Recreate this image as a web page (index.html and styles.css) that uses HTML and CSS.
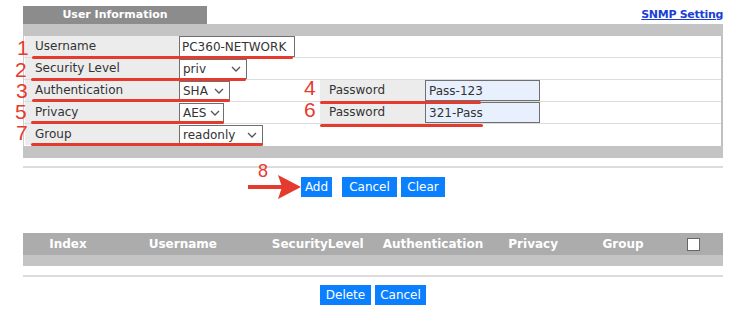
FILE: index.html
```html
<!DOCTYPE html>
<html>
<head>
    <meta charset="utf-8" />
    <title>SNMP User</title>
    <link rel="stylesheet" href="styles.css">
</head>
<body>
    <div class="page">
        <div class="top">
            <div class="tab">User Information</div>
            <a class="link" href="#">SNMP Setting</a>
        </div>
        <div class="bar"></div>
        <div class="form">
            <div class="row">
                <div class="lbl">Username</div>
                <div class="fld"><input type="text" class="txt" value="PC360-NETWORK"></div>
            </div>
            <div class="row">
                <div class="lbl">Security Level</div>
                <div class="fld"><div class="sel w-priv"><span>priv</span><svg width="10" height="6" viewBox="0 0 10 6"><path d="M1 1l4 4 4-4" fill="none" stroke="#555" stroke-width="1.3"/></svg></div></div>
            </div>
            <div class="row">
                <div class="lbl">Authentication</div>
                <div class="fld"><div class="sel w-sha"><span>SHA</span><svg width="10" height="6" viewBox="0 0 10 6"><path d="M1 1l4 4 4-4" fill="none" stroke="#555" stroke-width="1.3"/></svg></div></div>
                <div class="lbl2">Password</div>
                <input type="text" class="pwd" value="Pass-123">
            </div>
            <div class="row">
                <div class="lbl">Privacy</div>
                <div class="fld"><div class="sel w-aes"><span>AES</span><svg width="10" height="6" viewBox="0 0 10 6"><path d="M1 1l4 4 4-4" fill="none" stroke="#555" stroke-width="1.3"/></svg></div></div>
                <div class="lbl2">Password</div>
                <input type="text" class="pwd" value="321-Pass">
            </div>
            <div class="row">
                <div class="lbl">Group</div>
                <div class="fld"><div class="sel w-grp"><span>readonly</span><svg width="10" height="6" viewBox="0 0 10 6"><path d="M1 1l4 4 4-4" fill="none" stroke="#555" stroke-width="1.3"/></svg></div></div>
            </div>
        </div>
        <div class="bar"></div>
        <div class="rule"></div>
        <div class="btns">
            <button class="btn b-add">Add</button>
            <button class="btn b-cancel">Cancel</button>
            <button class="btn b-clear">Clear</button>
        </div>

        <table class="list">
            <tr class="head">
                <th class="c1">Index</th>
                <th class="c2">Username</th>
                <th class="c3">SecurityLevel</th>
                <th class="c4">Authentication</th>
                <th class="c5">Privacy</th>
                <th class="c6">Group</th>
                <th class="c7"><span class="chk"></span></th>
            </tr>
            <tr class="empty"><td colspan="7"></td></tr>
        </table>
        <div class="rule rule2"></div>
        <div class="btns btns2">
            <button class="btn b-del">Delete</button>
            <button class="btn b-del">Cancel</button>
        </div>
    </div>

    <!-- red marks drawn on top of the screenshot -->
    <div class="marks">
        <span class="num" style="left:17px;top:37px">1</span>
        <span class="num" style="left:15px;top:59px">2</span>
        <span class="num" style="left:16px;top:80px">3</span>
        <span class="num" style="left:304px;top:77px">4</span>
        <span class="num" style="left:15px;top:101px">5</span>
        <span class="num" style="left:304px;top:99px">6</span>
        <span class="num" style="left:16px;top:122px">7</span>
        <span class="num n8" style="left:258px;top:161px">8</span>
        <span class="uline" style="left:32px;top:56px;width:261px"></span>
        <span class="uline" style="left:31px;top:78px;width:215px"></span>
        <span class="uline" style="left:32px;top:99px;width:198px"></span>
        <span class="uline" style="left:31px;top:121px;width:193px"></span>
        <span class="uline" style="left:31px;top:143px;width:232px"></span>
        <span class="uline" style="left:320px;top:101px;width:161px"></span>
        <span class="uline" style="left:320px;top:124px;width:163px"></span>
        <svg class="arrow" width="56" height="30" viewBox="0 0 56 30">
            <path d="M0 15H34" stroke="#e53b2f" stroke-width="4"/>
            <path d="M30 3L53 15L30 27L34 15Z" fill="#e53b2f"/>
        </svg>
    </div>
</body>
</html>
```

FILE: styles.css
```css
body{
    margin: 0;
    font-family: "DejaVu Sans", "Liberation Sans", sans-serif;
    font-size: 12px;
    color: #333;
    background: #fff;
    position: relative;
}
.page{
    width: 700px;
    margin-left: 23px;
    padding-top: 6px;
}
.top{
    display: flex;
    justify-content: space-between;
    align-items: flex-end;
    height: 18px;
}
.tab{
    width: 184px;
    height: 18px;
    line-height: 18px;
    background: #8c8c8c;
    color: #fff;
    font-weight: bold;
    font-size: 11px;
    text-align: center;
}
.link{
    color: #1a3fd6;
    font-weight: bold;
    font-size: 11px;
    letter-spacing: -0.3px;
    margin-bottom: 3px;
}
.bar{
    height: 12px;
    background: #c4c4c4;
}
.form{
    border-left: 1px solid #cfcfcf;
    border-right: 2px solid #c0c0c0;
}
.row{
    display: flex;
    align-items: flex-start;
    height: 21px;
    border-bottom: 1px solid #dcdcdc;
}
.row:last-child{
    border-bottom: none;
    height: 22px;
}
.lbl{
    width: 144px;
    height: 21px;
    line-height: 21px;
    margin-left: 1px;
    padding-left: 10px;
    background: #ececec;
}
.fld{
    width: 141px;
}
.txt, .pwd{
    box-sizing: border-box;
    height: 21px;
    border: 1px solid #6f6f6f;
    padding: 0 3px;
    font-family: inherit;
    font-size: 12px;
    color: #333;
    margin: 0;
}
.txt{
    width: 116px;
    background: #fff;
    padding: 0 2px;
}
.pwd{
    width: 115px;
    background: #e8f0fe;
}
.lbl2{
    width: 96px;
    height: 21px;
    line-height: 21px;
    padding-left: 9px;
    background: #ececec;
}
.sel{
    box-sizing: border-box;
    height: 20px;
    margin-top: 1px;
    border: 1px solid #6f6f6f;
    display: flex;
    align-items: center;
    justify-content: space-between;
    padding: 0 5px 0 3px;
    background: #fff;
}
.w-priv{ width: 68px; }
.w-sha{ width: 51px; }
.w-aes{ width: 45px; padding-right: 3px; }
.w-grp{ width: 84px; }
.rule{
    height: 2px;
    background: #dcdcdc;
    margin-top: 8px;
}
.btns{
    display: flex;
    justify-content: center;
    gap: 4px;
    margin-top: 9px;
}
.btn{
    height: 20px;
    border: none;
    background: #0a80ff;
    color: #fff;
    font-family: inherit;
    font-size: 12px;
    padding: 0;
    text-align: center;
}
.b-add{
    width: 31px;
    margin-right: 6px;
}
.b-cancel{
    width: 55px;
}
.b-clear{
    width: 44px;
}
.b-del{
    width: 51px;
}
.list{
    width: 700px;
    border-collapse: collapse;
    margin-top: 36px;
}
.head th{
    height: 22px;
    padding: 0;
    background: #acacac;
    color: #fff;
    font-weight: bold;
    font-size: 12px;
    text-align: center;
}
.empty td{
    height: 11px;
    padding: 0;
    background: #c4c4c4;
}
.c1{ width: 90px; }
.c2{ width: 140px; }
.c3{ width: 130px; }
.c4{ width: 100px; }
.c5{ width: 100px; }
.c6{ width: 80px; }
.c7{ width: 60px; }
.chk{
    display: inline-block;
    width: 11px;
    height: 11px;
    background: #fff;
    border: 1px solid #666;
    vertical-align: middle;
}
.rule2{
    margin-top: 9px;
}
.btns2{
    margin-top: 8px;
}
.marks{
    position: absolute;
    top: 0;
    left: 0;
}
.num{
    position: absolute;
    color: #e53b2f;
    font-family: "Liberation Sans", sans-serif;
    font-size: 21px;
    line-height: 21px;
}
.n8{
    font-size: 18px;
}
.uline{
    position: absolute;
    height: 3px;
    background: #e53b2f;
    border-radius: 2px;
}
.arrow{
    position: absolute;
    left: 248px;
    top: 172px;
}
```
